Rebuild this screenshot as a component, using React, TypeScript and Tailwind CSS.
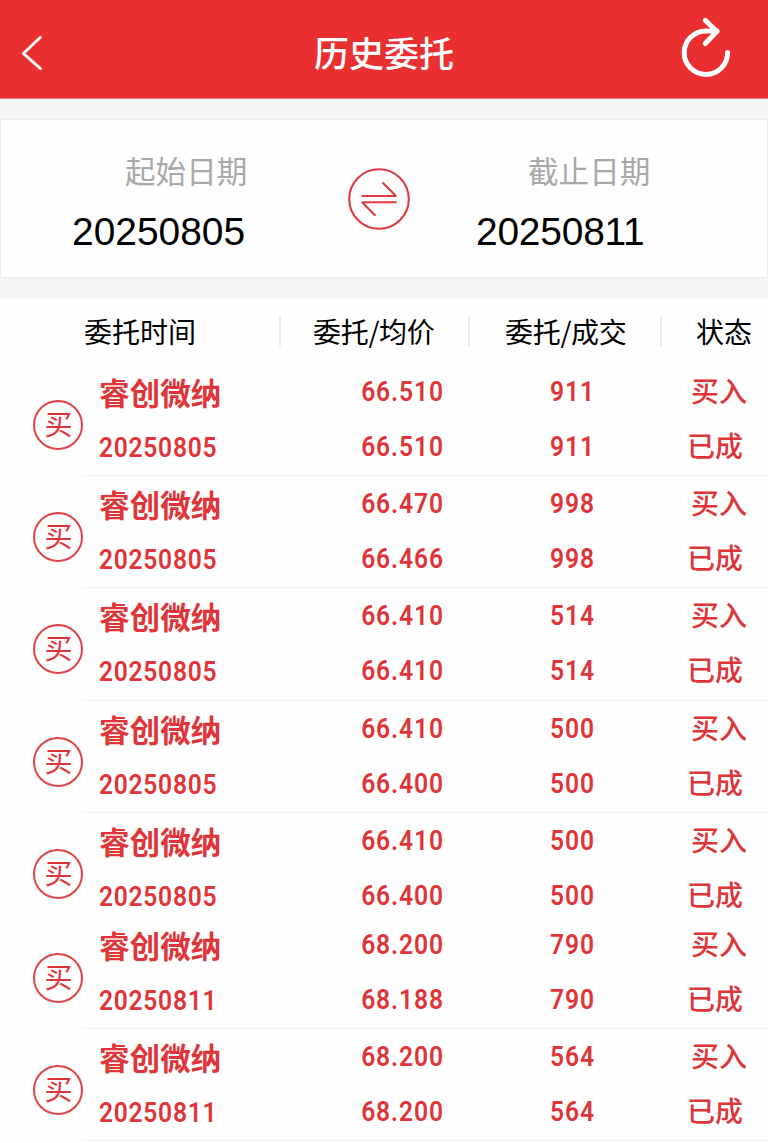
import React from 'react';

interface Order {
  name: string;
  date: string;
  price: string;
  avgPrice: string;
  amount: string;
  dealt: string;
}

const olderOrders: Order[] = [
  { name: '睿创微纳', date: '20250805', price: '66.510', avgPrice: '66.510', amount: '911', dealt: '911' },
  { name: '睿创微纳', date: '20250805', price: '66.470', avgPrice: '66.466', amount: '998', dealt: '998' },
  { name: '睿创微纳', date: '20250805', price: '66.410', avgPrice: '66.410', amount: '514', dealt: '514' },
  { name: '睿创微纳', date: '20250805', price: '66.410', avgPrice: '66.400', amount: '500', dealt: '500' },
  { name: '睿创微纳', date: '20250805', price: '66.410', avgPrice: '66.400', amount: '500', dealt: '500' },
];

const newerOrders: Order[] = [
  { name: '睿创微纳', date: '20250811', price: '68.200', avgPrice: '68.188', amount: '790', dealt: '790' },
  { name: '睿创微纳', date: '20250811', price: '68.200', avgPrice: '68.200', amount: '564', dealt: '564' },
];

const Header: React.FC = () => (
  <header className="flex h-[99px] items-center justify-between border-b border-[#e08080] bg-[#e92f30] text-white">
    <button className="w-[100px]" aria-label="返回">
      <svg width="60" height="99" viewBox="0 0 60 99" fill="none" stroke="currentColor" strokeWidth="2.8" strokeLinecap="round" strokeLinejoin="round">
        <path d="M40.5 37.2 23.3 53.4 40.5 68.6" />
      </svg>
    </button>
    <h1 className="pt-[5px] text-[35px] leading-[40px] font-medium">历史委托</h1>
    <button className="flex w-[100px] justify-end" aria-label="刷新">
      <svg width="100" height="99" viewBox="668 0 100 99" fill="none" stroke="currentColor" strokeWidth="5" strokeLinecap="round" strokeLinejoin="round">
        <path d="M727.6 52.5A21.7 21.7 0 1 1 706 31H717" />
        <path d="M705.3 20.3 716.8 31.5 705.3 43.5" />
      </svg>
    </button>
  </header>
);

const SwapIcon: React.FC = () => (
  <svg className="mt-12 shrink-0" width="62" height="62" viewBox="0 0 62 62" fill="none" stroke="#dc3c3f" strokeWidth="2.1">
    <circle cx="31" cy="31" r="29.8" />
    <path d="M13.5 28H48L34.5 14.5M48.5 34.3H14L27.5 47.8" strokeLinejoin="bevel" />
  </svg>
);

const DateRange: React.FC = () => (
  <section className="flex h-[159px] border border-[#ececec] bg-[#fefefe]">
    <div className="w-[347px] pt-[31px]">
      <p className="pl-[124px] text-[30.6px] leading-[38px] text-[#a8a8a8]">起始日期</p>
      <p className="mt-5 pl-[71px] font-['Liberation_Sans',sans-serif] text-[38.9px] leading-[46px] text-black">20250805</p>
    </div>
    <SwapIcon />
    <div className="pt-[31px]">
      <p className="pl-[118px] text-[30.6px] leading-[38px] text-[#a8a8a8]">截止日期</p>
      <p className="mt-5 pl-[66px] font-['Liberation_Sans',sans-serif] text-[38.9px] leading-[46px] tracking-[-0.2px] text-black">20250811</p>
    </div>
  </section>
);

const TableHead: React.FC = () => (
  <div className="flex h-[65px] items-start pt-[17px] text-[28px] leading-[30px] whitespace-nowrap text-black">
    <span className="w-[281px] border-r-2 border-[#ebebeb] pl-[84px]">委托时间</span>
    <span className="w-[189px] border-r-2 border-[#ebebeb] pl-8 tracking-[-0.3px]">委托/均价</span>
    <span className="w-[192px] border-r-2 border-[#ebebeb] pl-[35px] tracking-[-0.3px]">委托/成交</span>
    <span className="pl-[34px]">状态</span>
  </div>
);

// narrow digits set wide apart
const numberClass = "scale-x-[0.88] font-['Roboto',sans-serif] font-semibold text-[28px] leading-[30px]";

interface OrderRowProps {
  order: Order;
  last?: boolean;
}

const OrderRow: React.FC<OrderRowProps> = ({ order, last }) => (
  <li className={last ? 'flex h-[104px]' : 'flex h-[112.2px]'}>
    <div className="w-[83px] shrink-0 pt-9 pl-[33px]">
      <div className="flex h-[50px] w-[50px] items-center justify-center rounded-full border-2 border-[#e04448] pb-[4px] pl-px text-[28px] leading-none">
        买
      </div>
    </div>
    <div className={last ? 'flex flex-1' : 'flex flex-1 border-b border-[#f2f2f2]'}>
      <div className="w-[234px] pt-[11px] pl-4">
        <p className="text-[30.6px] leading-[34px] font-bold">{order.name}</p>
        <p className={`mt-6 origin-left tracking-[0.8px] ${numberClass}`}>{order.date}</p>
      </div>
      <div className="w-[171px] pt-[13px] text-center">
        <p className={`tracking-[1px] ${numberClass}`}>{order.price}</p>
        <p className={`mt-[25px] tracking-[1px] ${numberClass}`}>{order.avgPrice}</p>
      </div>
      <div className="w-[169px] pt-[13px] text-center">
        <p className={`tracking-[1px] ${numberClass}`}>{order.amount}</p>
        <p className={`mt-[25px] tracking-[1px] ${numberClass}`}>{order.dealt}</p>
      </div>
      <div className="pt-[11px] text-[28px] leading-[30px] font-medium">
        <p className="pl-[34px]">买入</p>
        <p className="mt-[25px] pl-[30px]">已成</p>
      </div>
    </div>
  </li>
);

const OrderList: React.FC<{ orders: Order[]; joined?: boolean }> = ({ orders, joined }) => (
  <ul className="text-[#e03538]">
    {orders.map((order, i) => (
      <OrderRow key={i} order={order} last={joined && i === orders.length - 1} />
    ))}
  </ul>
);

export default function App() {
  return (
    <div className="h-[1143px] w-[768px] overflow-hidden bg-[#f4f4f4] font-['Noto_Sans_CJK_SC',sans-serif]">
      <Header />
      <div className="h-5" />
      <DateRange />
      <div className="h-[21px]" />
      <main className="bg-[#fefefe] pb-4">
        <TableHead />
        <OrderList orders={olderOrders} joined />
        <OrderList orders={newerOrders} />
      </main>
    </div>
  );
}
